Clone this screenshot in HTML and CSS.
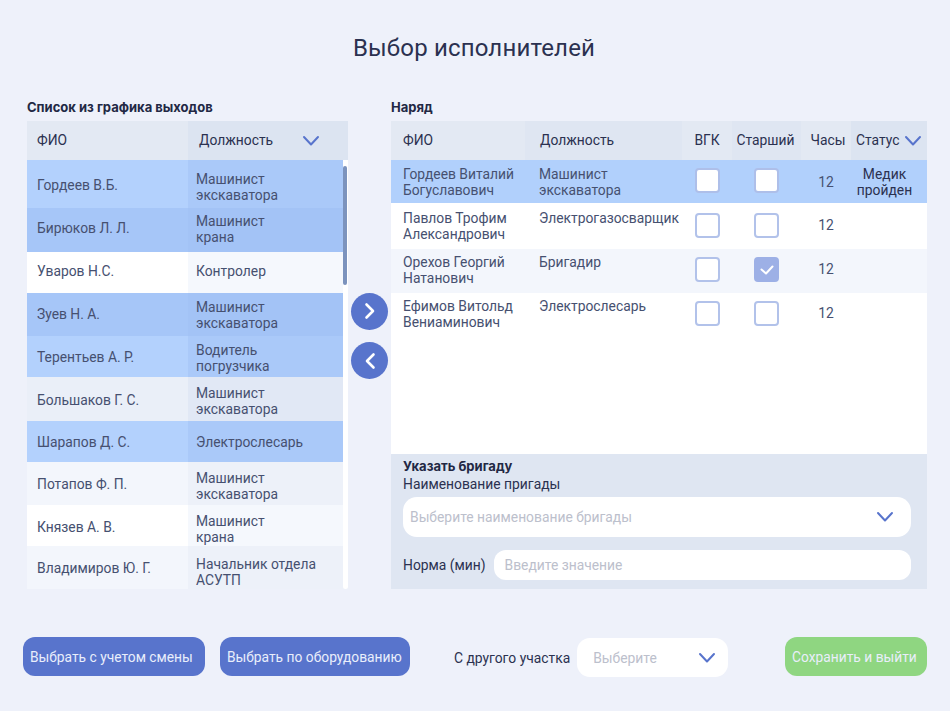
FILE: index.html
```html
<!DOCTYPE html>
<html lang="ru">
<head>
  <meta charset="UTF-8" />
  <title>Выбор исполнителей</title>
  <link rel="stylesheet" href="styles.css">
</head>
<body>
  <svg class="sprite" width="0" height="0">
    <symbol id="chevron" viewBox="0 0 18 12"><path d="M2 2l7 7.5L16 2" fill="none" stroke="currentColor" stroke-width="2" stroke-linecap="round" stroke-linejoin="round"/></symbol>
  </svg>

  <h1 class="title">Выбор исполнителей</h1>

  <main class="columns">
    <section class="left">
      <h2 class="caption">Список из графика выходов</h2>
      <div class="left-head">
        <div class="cell name">ФИО</div>
        <div class="cell role">Должность <svg class="chev"><use href="#chevron"/></svg></div>
      </div>
      <div class="left-body">
        <div class="left-list">
          <div class="row sel-a"><div class="name">Гордеев В.Б.</div><div class="role">Машинист<br>экскаватора</div></div>
          <div class="row sel-b"><div class="name">Бирюков Л. Л.</div><div class="role">Машинист<br>крана</div></div>
          <div class="row plain"><div class="name">Уваров Н.С.</div><div class="role">Контролер</div></div>
          <div class="row sel-b"><div class="name">Зуев Н. А.</div><div class="role">Машинист<br>экскаватора</div></div>
          <div class="row sel-a"><div class="name">Терентьев А. Р.</div><div class="role">Водитель<br>погрузчика</div></div>
          <div class="row shade"><div class="name">Большаков Г. С.</div><div class="role">Машинист<br>экскаватора</div></div>
          <div class="row sel-a"><div class="name">Шарапов Д. С.</div><div class="role">Электрослесарь</div></div>
          <div class="row soft"><div class="name">Потапов Ф. П.</div><div class="role">Машинист<br>экскаватора</div></div>
          <div class="row plain"><div class="name">Князев А. В.</div><div class="role">Машинист<br>крана</div></div>
          <div class="row soft"><div class="name">Владимиров Ю. Г.</div><div class="role">Начальник отдела<br>АСУТП</div></div>
        </div>
        <div class="scroll"><div class="thumb"></div></div>
      </div>
    </section>

    <div class="moves">
      <button class="move"><svg viewBox="0 0 12 18"><path d="M2.500 2.500L9 9l-6.500 6.500" fill="none" stroke="#fff" stroke-width="2.6" stroke-linecap="round" stroke-linejoin="round"/></svg></button>
      <button class="move"><svg viewBox="0 0 12 18"><path d="M9.500 2.500L3 9l6.500 6.500" fill="none" stroke="#fff" stroke-width="2.6" stroke-linecap="round" stroke-linejoin="round"/></svg></button>
    </div>

    <section class="right">
      <h2 class="caption">Наряд</h2>
      <div class="order-head">
        <div class="cell c1">ФИО</div>
        <div class="cell c2">Должность</div>
        <div class="cell c3">ВГК</div>
        <div class="cell c4">Старший</div>
        <div class="cell c5">Часы</div>
        <div class="cell c6">Статус <svg class="chev"><use href="#chevron"/></svg></div>
      </div>
      <div class="order-list">
        <div class="order-row active">
          <div class="who">Гордеев Виталий<br>Богуславович</div>
          <div class="job">Машинист<br>экскаватора</div>
          <div class="box-cell"><span class="box"></span></div>
          <div class="box-cell"><span class="box"></span></div>
          <div class="hours">12</div>
          <div class="state">Медик<br>пройден</div>
        </div>
        <div class="order-row second-row">
          <div class="who">Павлов Трофим<br>Александрович</div>
          <div class="job">Электрогазосварщик</div>
          <div class="box-cell"><span class="box"></span></div>
          <div class="box-cell"><span class="box"></span></div>
          <div class="hours">12</div>
          <div class="state"></div>
        </div>
        <div class="order-row soft">
          <div class="who">Орехов Георгий<br>Натанович</div>
          <div class="job">Бригадир</div>
          <div class="box-cell"><span class="box"></span></div>
          <div class="box-cell"><span class="box on"><svg viewBox="0 0 14 10"><path d="M1.500 4.500L6 8.500l6.500-7" fill="none" stroke="#fff" stroke-width="2" stroke-linecap="round" stroke-linejoin="round"/></svg></span></div>
          <div class="hours">12</div>
          <div class="state"></div>
        </div>
        <div class="order-row">
          <div class="who">Ефимов Витольд<br>Вениаминович</div>
          <div class="job">Электрослесарь</div>
          <div class="box-cell"><span class="box"></span></div>
          <div class="box-cell"><span class="box"></span></div>
          <div class="hours">12</div>
          <div class="state"></div>
        </div>
      </div>
      <div class="brigade">
        <h3 class="brigade-title">Указать бригаду</h3>
        <div class="brigade-label">Наименование пригады</div>
        <div class="field wide"><span>Выберите наименование бригады</span><svg class="chev"><use href="#chevron"/></svg></div>
        <div class="norm">
          <span>Норма (мин)</span>
          <div class="field short"><span>Введите значение</span></div>
        </div>
      </div>
    </section>
  </main>

  <footer class="footer">
    <button class="btn blue first">Выбрать с учетом смены</button>
    <button class="btn blue second">Выбрать по оборудованию</button>
    <div class="other">
      <span>С другого участка</span>
      <div class="field pick"><span>Выберите</span><svg class="chev"><use href="#chevron"/></svg></div>
    </div>
    <button class="btn green">Сохранить и выйти</button>
  </footer>
</body>
</html>
```

FILE: styles.css
```css
* {
  box-sizing: border-box;
}
body {
  margin: 0;
  height: 711px;
  overflow: hidden;
  background-color: #eef1fa;
  font-family: Roboto, "Liberation Sans", sans-serif;
  font-size: 13.85px;
  line-height: 16px;
  color: #2b3150;
}
.sprite {
  position: absolute;
}
.chev {
  width: 18px;
  height: 12px;
  color: #5874cc;
  flex: none;
}
.title {
  margin: 0;
  padding: 33px 2px 0 0;
  height: 100px;
  text-align: center;
  font-size: 24px;
  line-height: 30px;
  font-weight: 400;
  letter-spacing: 0.17px;
  color: #2b3150;
}
.columns {
  display: flex;
  padding-left: 27px;
  height: 489px;
}
.caption {
  margin: 0;
  height: 21px;
  font-family: Inter, Roboto, sans-serif;
  font-size: 13px;
  line-height: 15px;
  font-weight: 700;
  color: #222844;
}
.cell {
  display: flex;
  align-items: center;
  padding-bottom: 2px;
}

/* левый список */
.left {
  width: 321px;
}
.left-head {
  display: grid;
  grid-template-columns: 161px 160px;
  height: 39px;
}
.left-head .name {
  background: #e3e9f3;
  padding-left: 10px;
}
.left-head .role {
  background: #dce4f1;
  padding-left: 11px;
  justify-content: space-between;
  padding-right: 28px;
}
.left-head .chev {
  margin-top: 2px;
}
.left-body {
  display: flex;
  height: 429px;
}
.left-list {
  width: 316px;
  display: grid;
  grid-template-rows: 48px 44px 41px 43px 41px 44px 41px 43px 41px 43px;
}
.row {
  display: grid;
  grid-template-columns: 161px 155px;
  color: #465070;
}
.row .name,
.row .role {
  display: flex;
  align-items: center;
}
.row .name {
  padding-left: 10px;
}
.row .role {
  padding-left: 8px;
}
.sel-a .name { background: #b3d1fd; }
.sel-a .role { background: #aac9f9; }
.sel-b .name { background: #a6c6f8; }
.sel-b .role { background: #a3c3f6; }
.plain .name { background: #ffffff; }
.plain .role { background: #f5f8fd; }
.shade .name { background: #eaeff8; }
.shade .role { background: #e1e8f5; }
.soft .name { background: #f3f6fc; }
.soft .role { background: #edf1f9; }

/* в макете текст в строках стоит неровно */
.row:nth-child(1) .name { padding-top: 2px; }
.row:nth-child(1) .role { padding-top: 6px; }
.row:nth-child(2) .name { padding-bottom: 4px; }
.row:nth-child(2) .role { padding-bottom: 2px; }
.row:nth-child(3) .name { padding-bottom: 4px; }
.row:nth-child(3) .role { padding-bottom: 4px; }
.row:nth-child(4) .name { padding-bottom: 2px; }
.row:nth-child(5) .role { padding-top: 2px; }
.row:nth-child(6) .name { padding-top: 2px; }
.row:nth-child(6) .role { padding-top: 4px; }
.row:nth-child(8) .role { padding-top: 4px; }
.row:nth-child(9) .name { padding-top: 2px; }
.row:nth-child(9) .role { padding-top: 6px; }
.row:nth-child(10) .role { padding-top: 8px; }

.scroll {
  width: 5px;
  padding-top: 6px;
  background: #fff;
  border-radius: 0 0 3px 3px;
}
.thumb {
  height: 119px;
  width: 4px;
  border-radius: 2px;
  background: #7c93bd;
}

/* кнопки переноса */
.moves {
  width: 43px;
  padding-top: 192.5px;
  display: flex;
  flex-direction: column;
  align-items: center;
  gap: 12.5px;
}
.move {
  width: 37px;
  height: 37px;
  padding: 0;
  border: 0;
  border-radius: 50%;
  background: #5874cc;
  display: flex;
  align-items: center;
  justify-content: center;
}
.move svg {
  width: 12px;
  height: 18px;
}

/* наряд */
.right {
  width: 536px;
}
.order-head,
.order-row {
  display: grid;
  grid-template-columns: 134px 157px 50px 69px 50px 76px;
}
.order-head {
  height: 39px;
}
.order-head .c1 { background: #e3e9f3; padding-left: 12px; }
.order-head .c2 { background: #dfe6f2; padding-left: 15px; }
.order-head .c3 { background: #e3e9f3; justify-content: center; }
.order-head .c4 { background: #dfe6f2; justify-content: center; padding-right: 2px; }
.order-head .c5 { background: #e3e9f3; justify-content: center; padding-left: 4px; }
.order-head .c6 { background: #dce4f1; padding-left: 5px; justify-content: space-between; padding-right: 5px; }
.order-head .c6 .chev {
  margin-top: 2px;
}
.order-list {
  height: 294px;
  background: #fff;
  display: grid;
  grid-template-rows: 43px 46px 44px 44px 1fr;
}
.order-row {
  color: #465070;
  padding-top: 5px;
}
.order-row.active {
  background: #b1d0fc;
  padding-top: 6px;
}
.order-row.second-row {
  padding-top: 7px;
}
.order-row.soft {
  background: #f3f6fc;
}
.who {
  padding-left: 12px;
}
.job {
  padding-left: 14px;
  white-space: nowrap;
}
.box-cell {
  display: flex;
  justify-content: center;
  padding-top: 3px;
}
.active .box-cell {
  padding-top: 2px;
}
.box {
  width: 25px;
  height: 25px;
  border: 2px solid #b2c2ea;
  border-radius: 4px;
  background: #fff;
  display: flex;
  align-items: center;
  justify-content: center;
}
.active .box {
  border-color: #aebfe9;
}
.box.on {
  background: #9db0e6;
  border-color: #9db0e6;
}
.box svg {
  width: 14px;
  height: 10px;
}
.hours {
  text-align: center;
  padding-top: 7px;
}
.active .hours {
  padding-top: 8px;
}
.state {
  text-align: center;
  color: #2b3150;
  padding-right: 9px;
}

/* бригада */
.brigade {
  height: 135px;
  background: #dfe6f2;
  padding: 5px 16px 0 12px;
}
.brigade-title {
  margin: 0;
  height: 17px;
  font-family: Inter, Roboto, sans-serif;
  font-size: 13px;
  line-height: 15px;
  font-weight: 700;
  color: #222844;
}
.brigade-label {
  height: 21px;
}
.field {
  display: flex;
  align-items: center;
  justify-content: space-between;
  background: #fff;
  color: #bcc0cc;
}
.wide {
  height: 40px;
  border-radius: 14px;
  padding: 0 17px 0 7px;
}
.norm {
  display: flex;
  align-items: center;
  gap: 8px;
  margin-top: 13px;
}
.short {
  flex: 1;
  height: 30px;
  border-radius: 12px;
  padding-left: 11px;
}

/* низ страницы */
.footer {
  display: flex;
  align-items: center;
  height: 41px;
  margin-top: 47px;
  padding: 0 23px;
}
.btn {
  height: 39px;
  padding: 0 0 0 7px;
  border: 0;
  border-radius: 12px;
  font-family: inherit;
  font-size: 13.8px;
  text-align: left;
  color: #e9eefb;
}
.blue {
  background: #5874cc;
}
.first {
  width: 182px;
}
.second {
  width: 190px;
  margin-left: 15px;
}
.other {
  display: flex;
  align-items: center;
  gap: 7px;
  margin-left: 44px;
  margin-top: 2px;
}
.pick {
  width: 151px;
  height: 39px;
  border-radius: 13px;
  padding: 0 12px 0 16px;
}
.green {
  width: 142px;
  margin-left: auto;
  background: #8fd681;
}
```
